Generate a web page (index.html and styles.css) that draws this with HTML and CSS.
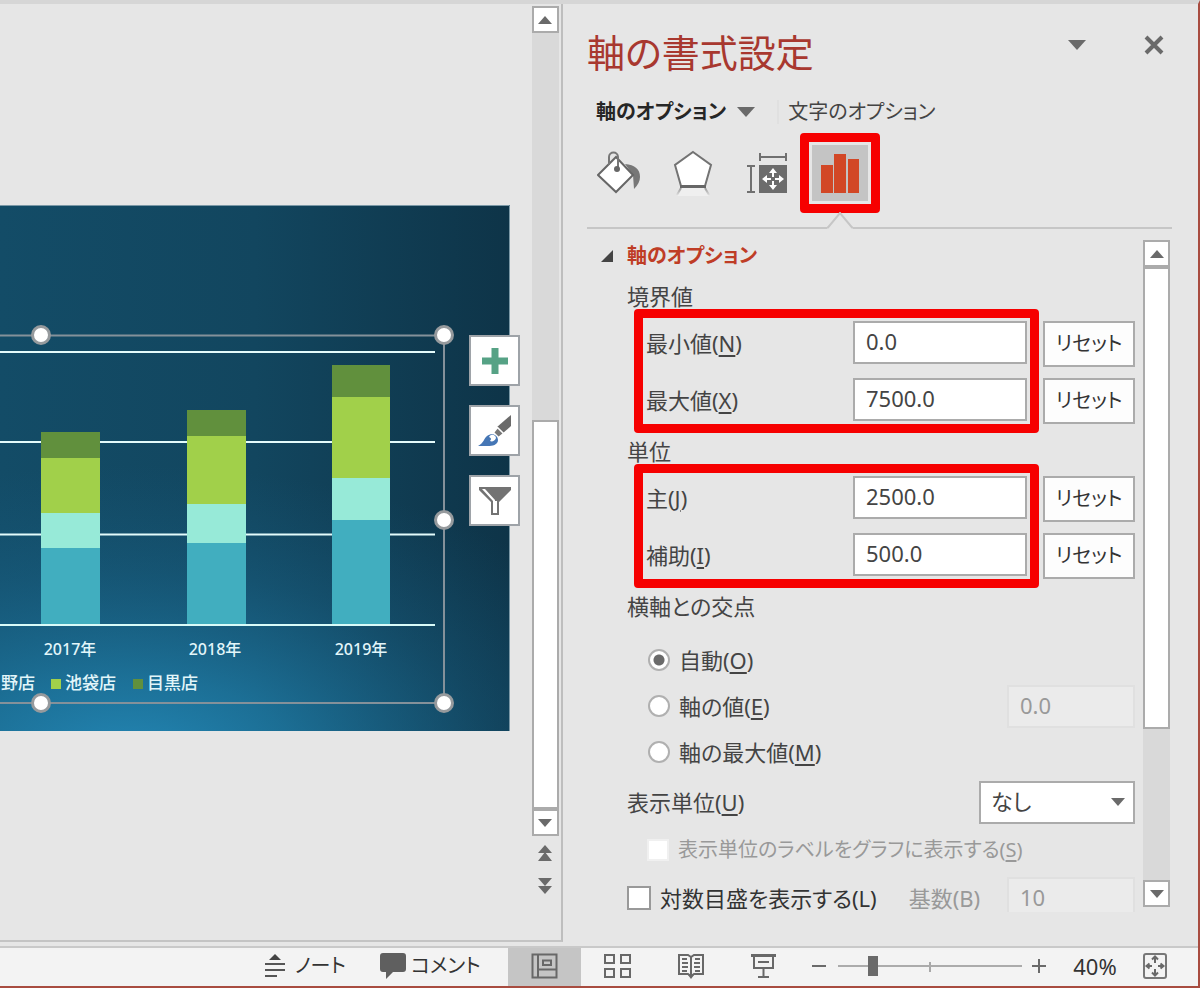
FILE: index.html
```html
<!DOCTYPE html>
<html lang="ja">
<head>
<meta charset="utf-8">
<meta name="viewport" content="width=device-width, initial-scale=1">
<title>軸の書式設定</title>
<link rel="stylesheet" href="styles.css">
</head>
<body>
<div class="app">
  <div class="main">
    <section class="workspace" aria-label="スライド">
      <div class="canvas">
        <div class="slide">
          <svg class="chart" viewBox="0 0 510 526" role="img" aria-label="店舗別売上グラフ">
            <defs>
              <linearGradient id="base" x1="0" x2="1" y1="0" y2="0">
                <stop offset="0" stop-color="#134c67"/>
                <stop offset=".5" stop-color="#12465f"/>
                <stop offset="1" stop-color="#0e3448"/>
              </linearGradient>
              <radialGradient id="glow" gradientUnits="userSpaceOnUse" cx="0" cy="0" r="1" gradientTransform="translate(130 560) scale(560 300)">
                <stop offset="0" stop-color="#2489b8"/>
                <stop offset=".3" stop-color="#2080ac" stop-opacity=".7"/>
                <stop offset=".65" stop-color="#1c6f98" stop-opacity=".3"/>
                <stop offset="1" stop-color="#185f85" stop-opacity="0"/>
              </radialGradient>
            </defs>
            <rect width="510" height="526" fill="url(#base)"/>
            <rect width="510" height="526" fill="url(#glow)"/>
            <path d="M0 .5H509.5V526" fill="none" stroke="#7b98a6"/>
            <path d="M0 147H435M0 237H435M0 329.500H435" stroke="#e4fbfb" stroke-width="2"/>
            <g fill="#41aebf"><path d="M41 343h59v77H41zM187 338h59v82h-59zM332 315h58v105h-58z"/></g>
            <g fill="#97ead8"><path d="M41 308h59v35H41zM187 299h59v39h-59zM332 273h58v42h-58z"/></g>
            <g fill="#a1d04a"><path d="M41 253h59v55H41zM187 231h59v68h-59zM332 192h58v81h-58z"/></g>
            <g fill="#61903d"><path d="M41 227h59v26H41zM187 205h59v26h-59zM332 160h58v32h-58z"/></g>
            <path d="M0 420H435" stroke="#d9fbf8" stroke-width="2"/>
            <g class="chart-text" text-anchor="middle">
              <text x="70" y="450">2017年</text>
              <text x="215" y="450">2018年</text>
              <text x="361" y="450">2019年</text>
            </g>
            <path d="M0 130.500H444V498H0" fill="none" stroke="#84919a" stroke-width="2"/>
            <g class="chart-legend">
              <text x="1" y="484">野店</text>
              <path d="M51 474h10v10H51z" fill="#a1d04a"/>
              <text x="65" y="484">池袋店</text>
              <path d="M133 474h10v10h-10z" fill="#61903d"/>
              <text x="147" y="484">目黒店</text>
            </g>
            <g fill="#fff" stroke="#969a9d" stroke-width="3">
              <circle cx="41" cy="130" r="8.500"/><circle cx="444" cy="130" r="8.500"/>
              <circle cx="444" cy="315" r="8.500"/><circle cx="41" cy="498" r="8.500"/>
              <circle cx="444" cy="498" r="8.500"/>
            </g>
          </svg>
          <div class="chart-tools">
            <button class="tool" aria-label="グラフ要素"><svg width="28" height="28" viewBox="0 0 28 28"><path d="M10.500 1h7v9.500H27v7h-9.500V27h-7v-9.500H1v-7h9.500z" fill="#56a285"/></svg></button>
            <button class="tool" aria-label="グラフ スタイル"><svg width="34" height="34" viewBox="0 0 34 34"><path d="M33 1v11l-8 7-6-6z" fill="#6b6b6b"/><path d="M19.500 13.500l6 6-5 4-5-5z" fill="#777" stroke="#fff" stroke-width="1.500"/><path d="M0 32c6-3 6-8 9-10 5-4 11-1 11 4 0 5-6 6-10 6z" fill="#4576b5"/><path d="M11 23c2-4 7-2 7 1-1 3-4 4-6 3 1-1 2-3-1-4z" fill="#fff"/></svg></button>
            <button class="tool" aria-label="グラフ フィルター"><svg width="34" height="32" viewBox="0 0 34 32"><path d="M1 2h32v3L21 17v13h-8V17L1 5z" fill="#737373"/><path d="M4 4h3l10 11v13h-2V16z" fill="#fff"/><path d="M17 16h2v12h-2z" fill="#fff"/></svg></button>
          </div>
        </div>
      </div>
      <div class="doc-scroll">
        <div class="scrollbar">
          <button class="scroll-btn" aria-label="上へ"><svg width="14" height="8" viewBox="0 0 14 8"><path d="M7 0l7 8H0z"/></svg></button>
          <div class="doc-space"></div>
          <div class="doc-thumb"></div>
          <button class="scroll-btn" aria-label="下へ"><svg width="14" height="8" viewBox="0 0 14 8"><path d="M0 0h14L7 8z"/></svg></button>
        </div>
        <button class="jump" aria-label="前のスライド"><svg width="14" height="16" viewBox="0 0 14 16"><path d="M7 0l7 8H0zM7 7l7 9H0z"/></svg></button>
        <button class="jump" aria-label="次のスライド"><svg width="14" height="16" viewBox="0 0 14 16"><path d="M0 0h14L7 8zM0 8h14l-7 8z"/></svg></button>
      </div>
    </section>

    <aside class="pane">
      <header class="pane-head">
        <h1>軸の書式設定</h1>
        <button class="plain" aria-label="作業ウィンドウ オプション"><svg width="18" height="10" viewBox="0 0 18 10"><path d="M0 0h18L9 10z"/></svg></button>
        <button class="plain" aria-label="閉じる"><svg width="20" height="20" viewBox="0 0 20 20"><path d="M2 2l16 16M18 2L2 18" fill="none" stroke="#6a6a6a" stroke-width="4"/></svg></button>
      </header>
      <div class="tabs">
        <button class="tab tab-on">軸のオプション<svg width="18" height="10" viewBox="0 0 18 10"><path d="M0 0h18L9 10z"/></svg></button>
        <button class="tab">文字のオプション</button>
      </div>
      <div class="kinds">
        <button class="kind" aria-label="塗りつぶしと線"><svg width="44" height="44" viewBox="0 0 44 44"><path d="M28 13c10 1 15 5 15 13 0 4-2 8-6 12l-1-14z" fill="#777"/><path d="M1 24L19 6l17 18-17 17z" fill="#fff" stroke="#666" stroke-width="2"/><path d="M12 14V6c0-6 9-6 9 0v12" fill="none" stroke="#777" stroke-width="2"/><circle cx="20" cy="18" r="3" fill="#666"/></svg></button>
        <button class="kind" aria-label="効果"><svg width="42" height="46" viewBox="0 0 42 46"><defs><linearGradient id="fade" x1="0" x2="0" y1="0" y2="1"><stop stop-color="#999"/><stop offset="1" stop-color="#ddd"/></linearGradient></defs><path d="M9 38h24l4 8H5z" fill="#efefef"/><path d="M9 38l-4 7M33 38l4 7" stroke="url(#fade)" stroke-width="2"/><path d="M21 2l18 13-6 21H9L3 15z" fill="#fff" stroke="#737373" stroke-width="2"/><path d="M8 36.500h26" stroke="#666" stroke-width="3"/></svg></button>
        <button class="kind" aria-label="サイズとプロパティ"><svg width="42" height="42" viewBox="0 0 42 42"><path d="M13 13h28v28H13z" fill="#6c6c6c"/><path d="M14 5h26M14 1v8M40 1v8M5 14v26M1 14h8M1 40h8" stroke="#707070" stroke-width="2"/><g fill="#fff"><path d="M27 16l4 5h-8zM27 38l4-5h-8zM16 27l5-4v8zM38 27l-5-4v8z"/><path d="M26 20h2v5h-2zM26 29h2v5h-2zM20 26h5v2h-5zM29 26h5v2h-5z"/></g></svg></button>
        <button class="kind kind-on" aria-label="軸のオプション"><span class="kind-fill"><svg width="38" height="40" viewBox="0 0 38 40"><path d="M0 12h12v28H0zM13 1h12v39H13zM27 6h11v34H27z" fill="#d24726"/></svg></span><svg class="notch" width="26" height="17" viewBox="0 0 26 17"><path d="M0 17V16L13 1l13 15v1z" fill="#e6e6e6"/><path d="M0 15.500h1L13 1l12 14.500h1" fill="none" stroke="#c6c6c6" stroke-width="2"/></svg></button>
      </div>

      <div class="pane-body">
        <form class="options">
          <h2><svg width="13" height="13" viewBox="0 0 13 13"><path d="M12 0v12H0z"/></svg>軸のオプション</h2>

          <h3>境界値</h3>
          <div class="group">
            <div class="frame">
              <div class="row"><label for="min">最小値(<u>N</u>)</label><input id="min" class="field" type="text" value="0.0"></div>
              <div class="row"><label for="max">最大値(<u>X</u>)</label><input id="max" class="field" type="text" value="7500.0"></div>
            </div>
            <div class="resets"><button type="button">リセット</button><button type="button">リセット</button></div>
          </div>

          <h3>単位</h3>
          <div class="group">
            <div class="frame">
              <div class="row"><label for="major">主(<u>J</u>)</label><input id="major" class="field" type="text" value="2500.0"></div>
              <div class="row"><label for="minor">補助(<u>I</u>)</label><input id="minor" class="field" type="text" value="500.0"></div>
            </div>
            <div class="resets"><button type="button">リセット</button><button type="button">リセット</button></div>
          </div>

          <h3>横軸との交点</h3>
          <div class="radios">
            <div class="line"><input type="radio" name="cross" id="auto" checked><label for="auto">自動(<u>O</u>)</label></div>
            <div class="line"><input type="radio" name="cross" id="value"><label for="value">軸の値(<u>E</u>)</label><input class="field field-off" type="text" value="0.0" aria-label="軸の値" disabled></div>
            <div class="line"><input type="radio" name="cross" id="top"><label for="top">軸の最大値(<u>M</u>)</label></div>
          </div>

          <div class="line unit"><label for="unit">表示単位(<u>U</u>)</label>
            <span class="select"><select id="unit"><option>なし</option></select><svg width="14" height="8" viewBox="0 0 14 8"><path d="M0 0h14L7 8z"/></svg></span>
          </div>
          <div class="line sub off"><input type="checkbox" id="show" disabled><label for="show">表示単位のラベルをグラフに表示する(<u>S</u>)</label></div>
          <div class="line log"><input type="checkbox" id="log"><label for="log">対数目盛を表示する(L)</label><label class="log-base" for="log-base">基数(B)</label><input class="field field-off" type="text" id="log-base" value="10" disabled></div>
        </form>
        <div class="scrollbar pane-scroll">
          <button class="scroll-btn" aria-label="上へ"><svg width="14" height="8" viewBox="0 0 14 8"><path d="M7 0l7 8H0z"/></svg></button>
          <div class="pane-thumb"></div>
          <div class="pane-space"></div>
          <button class="scroll-btn" aria-label="下へ"><svg width="14" height="8" viewBox="0 0 14 8"><path d="M0 0h14L7 8z"/></svg></button>
        </div>
      </div>
    </aside>
  </div>

  <footer class="status">
    <button class="notes"><svg width="22" height="24" viewBox="0 0 22 24"><path d="M11 0l6 6H5z" fill="#444"/><path d="M1 10h20M1 16h20M1 22h12" stroke="#555" stroke-width="2"/></svg>ノート</button>
    <button class="comments"><svg width="26" height="26" viewBox="0 0 26 26"><path d="M3 0h20q3 0 3 3v13q0 3-3 3H13l-7 7v-7H3q-3 0-3-3V3q0-3 3-3z" fill="#5f5f5f"/></svg>コメント</button>
    <button class="view view-on" aria-label="標準"><svg width="27" height="26" viewBox="0 0 27 26"><path d="M1.500 1.500h24v23h-24zM7 2v22M7 16.500h18M12 7.500h8v4.500h-8z" fill="none" stroke="#686868" stroke-width="2"/></svg></button>
    <button class="view" aria-label="スライド一覧"><svg width="27" height="26" viewBox="0 0 27 26"><path d="M1 2h9v8H1zM17 2h9v8h-9zM1 16h9v8H1zM17 16h9v8h-9z" fill="none" stroke="#686868" stroke-width="2"/></svg></button>
    <button class="view" aria-label="閲覧表示"><svg width="26" height="26" viewBox="0 0 26 26"><path d="M13 4L10 2H1v19h9l3 2 3-2h9V2h-9zM13 4v20" fill="none" stroke="#686868" stroke-width="2"/><path d="M4 6h5M4 10h6M4 14h6M4 18h5M17 6h5M16 10h6M16 14h6M17 18h5" stroke="#686868" stroke-width="2"/><path d="M10 22h6l-3 4z" fill="#686868"/></svg></button>
    <button class="view" aria-label="スライドショー"><svg width="25" height="26" viewBox="0 0 25 26"><path d="M0 3h25M3 3v12h19V3M7 9h11M12.500 15v9M7 24h11" fill="none" stroke="#686868" stroke-width="2"/><path d="M0 1h25v3H0z" fill="#686868"/></svg></button>
    <button class="minus" aria-label="縮小"><svg width="14" height="14" viewBox="0 0 14 14"><path d="M0 6h14v2H0z"/></svg></button>
    <span class="zoom"><input type="range" min="0" max="100" value="17" aria-label="ズーム"></span>
    <button class="plus" aria-label="拡大"><svg width="14" height="14" viewBox="0 0 14 14"><path d="M0 6h6V0h2v6h6v2H8v6H6V8H0z"/></svg></button>
    <button class="percent">40%</button>
    <button class="fit" aria-label="ウィンドウに合わせる"><svg width="24" height="26" viewBox="0 0 24 26"><rect x="1" y="1" width="22" height="24" rx="2" fill="none" stroke="#777" stroke-width="2"/><path d="M12 4v6M12 16v6M4 13h5M15 13h5M9 6.500l3-3 3 3M9 19.500l3 3 3-3M6.500 10.500l-3 2.500 3 2.500M17.500 10.500l3 2.500-3 2.500" fill="none" stroke="#686868" stroke-width="2"/></svg></button>
  </footer>
</div>
</body>
</html>
```
FILE: styles.css
```css
* { box-sizing: border-box; }

body {
  margin: 0;
  background: #e6e6e6;
  color: #444;
  font: 22px/24px "Noto Sans", "Noto Sans CJK JP", sans-serif;
  font-feature-settings: "palt";
}

button, input, select {
  margin: 0;
  padding: 0;
  border: 0;
  background: none;
  color: inherit;
  font: inherit;
  font-feature-settings: inherit;
}

svg { display: block; flex: none; fill: #6a6a6a; }
label { white-space: nowrap; }
u { text-underline-offset: 3px; text-decoration-thickness: 2px; }

.app {
  display: flex;
  flex-direction: column;
  height: 100vh;
  overflow: hidden;
  border-top: 4px solid #d6d6d6;
  border-right: 2px solid #a84c40;
  border-bottom: 2px solid #a84c40;
}

.main { display: flex; flex: 1; min-height: 0; }

/* Slide area */
.workspace {
  display: flex;
  flex: 1;
  min-width: 0;
  margin-bottom: 4px;
  border-right: 2px solid #bebebe;
  border-bottom: 2px solid #c4c4c4;
}
.canvas { flex: 1; min-width: 0; padding-top: 201px; }
.slide { position: relative; width: 510px; }
.chart { width: 100%; height: auto; }
.chart-text, .chart-legend { fill: #e2f6fa; font-size: 16px; font-weight: 500; }
.chart-legend { font-size: 17px; }
.chart-tools {
  position: absolute;
  top: 130px;
  right: -10px;
  display: flex;
  flex-direction: column;
  gap: 19px;
}
.tool {
  display: flex;
  align-items: center;
  justify-content: center;
  width: 51px;
  height: 51px;
  border: 2px solid #9ea3a8;
  background: #fff;
}

.doc-scroll {
  display: flex;
  flex-direction: column;
  align-items: center;
  width: 31px;
  padding: 2px 1px 46px 0;
}
.doc-scroll .scrollbar { flex: 1; margin-bottom: 9px; }
.scrollbar { display: flex; flex-direction: column; width: 27px; background: #d9d9d9; }
.scroll-btn {
  display: flex;
  align-items: center;
  justify-content: center;
  height: 27px;
  border: 2px solid #ababab;
  background: #fff;
}
.doc-space { flex: 389; }
.doc-thumb { flex: 387; border: 2px solid #ababab; background: #fff; }
.jump { display: flex; align-items: center; justify-content: center; width: 27px; height: 16px; }
.jump + .jump { margin-top: 17px; }

/* Format pane */
.pane {
  display: flex;
  flex-direction: column;
  width: 635px;
  padding: 0 26px 34px 24px;
}
.pane-head { display: flex; align-items: center; height: 96px; padding-right: 8px; }
.pane-head h1 {
  flex: 1;
  margin: 0;
  color: #a8382f;
  font-size: 38px;
  font-weight: 400;
  line-height: 48px;
}
.pane-head .plain { margin: 0 0 14px 58px; }

.tabs { display: flex; align-items: center; height: 24px; padding-left: 9px; font-size: 20px; }
.tab { display: flex; align-items: center; gap: 11px; white-space: nowrap; }
.tab-on {
  margin-right: 9px;
  padding-right: 22px;
  border-right: 2px solid #e0e0e0;
  color: #262626;
  font-weight: 700;
}

.kinds {
  display: flex;
  align-items: center;
  height: 105px;
  padding-bottom: 5px;
  border-bottom: 2px solid #c6c6c6;
}
.kind { display: flex; align-items: center; justify-content: center; width: 74px; height: 80px; }
.kind:first-child { margin-left: -5px; }
.kind-on {
  position: relative;
  width: 80px;
  margin-left: -4px;
  border: 9px solid #f60000;
  border-radius: 4px;
}
.kind-fill {
  display: flex;
  align-items: center;
  justify-content: center;
  width: 56px;
  height: 56px;
  background: #c4c4c4;
}
.notch { position: absolute; left: 18px; bottom: -25px; }

.pane-body { display: flex; flex: 1; min-height: 0; margin: 11px 2px 0 0; }
.options {
  flex: 1;
  min-width: 0;
  height: 100%;
  margin-right: 8px;
  padding-left: 40px;
  overflow: hidden;
}
.options h2 {
  display: flex;
  align-items: center;
  gap: 13px;
  height: 32px;
  margin: 0 0 6px -26px;
  color: #bf3d26;
  font-size: 20px;
}
.options h2 svg { fill: #444; }
.options h3 { margin: 0; padding: 6px 0 1px; font-size: 22px; font-weight: 400; }

.group { display: flex; gap: 4px; padding-left: 7px; }
.frame {
  display: flex;
  flex: 1;
  flex-direction: column;
  gap: 14px;
  padding: 3px;
  border: 9px solid #f60000;
  border-radius: 4px;
}
.row { display: flex; align-items: center; justify-content: space-between; }
.field {
  width: 174px;
  height: 43px;
  padding: 0 0 3px 11px;
  border: 2px solid #ababab;
  background: #fff;
}
.field-off { width: 128px; margin-left: auto; border-color: #e0e0e0; background: #ebebeb; color: #999; }
.resets { display: flex; flex-direction: column; gap: 11px; padding-top: 12px; }
.resets button {
  width: 92px;
  height: 46px;
  border: 2px solid #ababab;
  background: #fdfdfd;
  color: #333;
  font-size: 20px;
}

.line { display: flex; align-items: center; height: 46px; }
.radios { margin-top: 18px; padding-left: 21px; }
.line input[type="radio"], .line input[type="checkbox"] {
  appearance: none;
  width: 22px;
  height: 22px;
  margin-right: 9px;
  border: 2px solid #b0b0b0;
  background: #fff;
}
.line input[type="radio"] { border-radius: 50%; }
.line input[type="radio"]:checked { background: radial-gradient(circle, #6a6a6a 5px, #fff 6px); }

.unit { justify-content: space-between; margin-top: 4px; }
.select { position: relative; width: 156px; height: 43px; }
.select select {
  width: 100%;
  height: 100%;
  padding: 0 0 2px 10px;
  border: 2px solid #ababab;
  border-radius: 0;
  background: #fff;
  appearance: none;
}
.select svg { position: absolute; top: 17px; right: 10px; pointer-events: none; }
.sub { height: 50px; padding-left: 20px; }
.off { color: #999; font-size: 20px; }
.sub input[type="checkbox"] { border-color: #f0f0f0; }
.log { height: 46px; color: #333; }
.log .log-base { margin-left: 32px; color: #999; }
.log input[type="checkbox"] { width: 24px; height: 24px; border-color: #999; }

.pane-scroll { margin-bottom: 5px; }
.pane-thumb { flex: 461; border: 2px solid #ababab; background: #fff; }
.pane-space { flex: 152; }

/* Status bar */
.status {
  display: flex;
  justify-content: flex-end;
  height: 40px;
  padding-right: 22px;
  border-top: 2px solid #c9c9c9;
  background: #f3f3f3;
  color: #333;
}
.status button { display: flex; align-items: center; justify-content: center; padding-bottom: 2px; white-space: nowrap; }
.status .notes, .status .comments { justify-content: flex-start; font-size: 20px; }
.status .notes { width: 116px; gap: 9px; }
.status .comments { width: 128px; gap: 5px; }
.view { width: 73px; }
.view-on { background: #c5c5c5; }
.status .minus { width: 38px; }
.status .plus { width: 34px; }
.status .percent { width: 78px; }
.status .fit { width: 42px; }
.zoom {
  display: flex;
  align-items: center;
  width: 184px;
  padding-bottom: 2px;
  background: linear-gradient(#a8a8a8, #a8a8a8) center / 2px 10px no-repeat;
}
.zoom input {
  appearance: none;
  width: 100%;
  height: 20px;
  background: linear-gradient(#ababab, #ababab) center / 100% 2px no-repeat;
}
.zoom input::-webkit-slider-thumb { appearance: none; width: 10px; height: 20px; background: #6a6a6a; }
```
